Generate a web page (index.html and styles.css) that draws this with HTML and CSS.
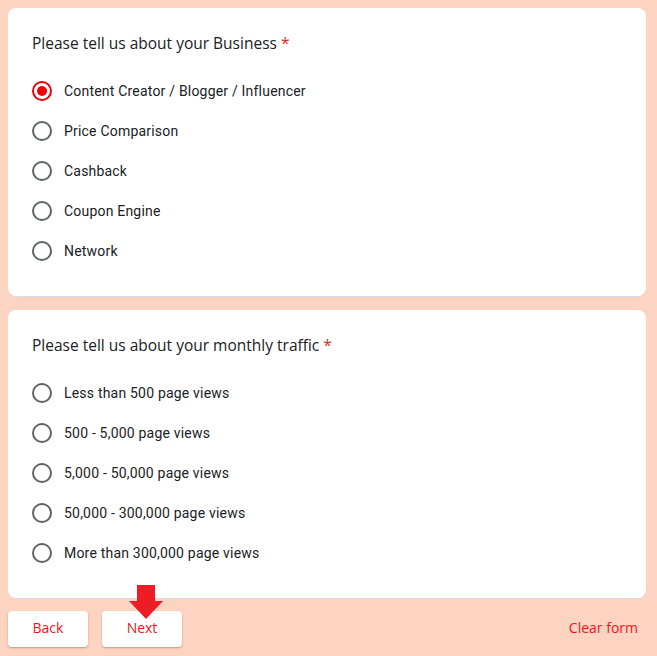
FILE: index.html
```html
<!DOCTYPE html>
<html>
<head>
<meta charset="utf-8">
<link rel="stylesheet" href="styles.css">
</head>
<body>
<div class="page">
  <div class="card">
    <div class="title">Please tell us about your Business <span class="req">*</span></div>
    <div class="options">
      <div class="opt"><span class="radio checked"></span><span class="label">Content Creator / Blogger / Influencer</span></div>
      <div class="opt"><span class="radio"></span><span class="label">Price Comparison</span></div>
      <div class="opt"><span class="radio"></span><span class="label">Cashback</span></div>
      <div class="opt"><span class="radio"></span><span class="label">Coupon Engine</span></div>
      <div class="opt"><span class="radio"></span><span class="label">Network</span></div>
    </div>
  </div>
  <div class="card">
    <div class="title">Please tell us about your monthly traffic <span class="req">*</span></div>
    <div class="options">
      <div class="opt"><span class="radio"></span><span class="label">Less than 500 page views</span></div>
      <div class="opt"><span class="radio"></span><span class="label">500 - 5,000 page views</span></div>
      <div class="opt"><span class="radio"></span><span class="label">5,000 - 50,000 page views</span></div>
      <div class="opt"><span class="radio"></span><span class="label">50,000 - 300,000 page views</span></div>
      <div class="opt"><span class="radio"></span><span class="label">More than 300,000 page views</span></div>
    </div>
  </div>
  <div class="actions">
    <button class="btn">Back</button>
    <button class="btn next">Next
      <svg class="arrow" width="36" height="36" viewBox="0 0 36 36"><path d="M9 0 H27 V16 H35 L18 34 L1 16 H9 Z" fill="#ee1c25"/></svg>
    </button>
    <span class="clear">Clear form</span>
  </div>
</div>
</body>
</html>
```
FILE: styles.css
```css
html, body {
  margin: 0;
  padding: 0;
  background: #fdd3c2;
}
body {
  font-family: Roboto, "Noto Sans", Arial, sans-serif;
}
.page {
  padding: 8px 11px 8px 8px;
  display: flex;
  flex-direction: column;
  gap: 14px;
}
.card {
  background: #fff;
  border-radius: 8px;
  box-shadow: 0 1px 0 #d6dbe0;
  padding: 23px 24px 25px 24px;
}
.title {
  font-family: "Open Sans", Roboto, sans-serif;
  font-size: 15.5px;
  line-height: 24px;
  color: #202124;
}
.req {
  color: #d93025;
}
.options {
  margin-top: 16px;
  display: flex;
  flex-direction: column;
}
.opt {
  height: 40px;
  display: flex;
  align-items: center;
}
.radio {
  width: 16px;
  height: 16px;
  border: 2px solid #5f6368;
  border-radius: 50%;
  margin-right: 12px;
  position: relative;
  flex: none;
}
.radio.checked {
  border-color: #e8000b;
}
.radio.checked::after {
  content: "";
  position: absolute;
  left: 3px;
  top: 3px;
  width: 10px;
  height: 10px;
  border-radius: 50%;
  background: #f00000;
}
.label {
  font-size: 14px;
  color: #202124;
  letter-spacing: 0.2px;
}
.actions {
  display: flex;
  align-items: center;
  gap: 14px;
  margin-top: -1px;
}
.btn {
  width: 80px;
  height: 36px;
  background: #fff;
  border: none;
  border-radius: 4px;
  box-shadow: 0 1px 2px rgba(120, 80, 60, 0.45);
  color: #f0141e;
  font-family: "Open Sans", Roboto, sans-serif;
  font-weight: 500;
  font-size: 14px;
  padding: 0 0 3px 0;
  position: relative;
}
.arrow {
  position: absolute;
  left: 26px;
  top: -26px;
}
.clear {
  margin-left: auto;
  color: #f0141e;
  font-family: "Open Sans", Roboto, sans-serif;
  font-size: 14px;
  font-weight: 500;
  margin-right: 8px;
  padding-bottom: 3px;
}
```
